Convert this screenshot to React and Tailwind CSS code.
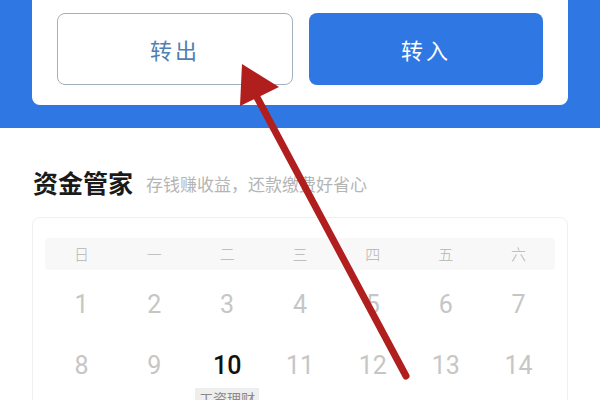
export default function App() {
  const weekdays = ["日", "一", "二", "三", "四", "五", "六"]
  const row1 = [1, 2, 3, 4, 5, 6, 7]
  const row2 = [8, 9, 10, 11, 12, 13, 14]

  return (
    <div
      className="relative w-[600px] h-[400px] overflow-hidden bg-white"
      style={{ fontFamily: '"Noto Sans CJK SC", "Noto Sans", sans-serif' }}
    >
      {/* Blue header band with action card */}
      <div className="bg-[#2f78e4] px-[32px] pb-[23px]">
        <div className="h-[105px] bg-white rounded-b-[8px] px-[25px] pt-[13px] flex gap-[16px]">
          <button className="flex-1 h-[72px] rounded-[8px] border border-[#a3b0bd] text-[#4f7fb3] text-[22px] tracking-[3px]">
            转出
          </button>
          <button className="flex-1 h-[72px] rounded-[8px] bg-[#2f78e4] text-white text-[22px] tracking-[3px]">
            转入
          </button>
        </div>
      </div>

      {/* Section title */}
      <div className="mt-[39px] px-[33px] flex items-center gap-[13px] h-[32px]">
        <span className="text-[25px] font-bold text-[#1a1a1a]">资金管家</span>
        <span className="text-[17px] text-[#b5b5b5] mt-[2px]">存钱赚收益，还款缴费好省心</span>
      </div>

      {/* Calendar card */}
      <div className="mt-[18px] mx-[32px] border border-[#f0f0f0] rounded-[8px] px-[12px] pt-[20px] h-[300px]">
        <div className="h-[32px] bg-[#f8f8f8] rounded-[4px] grid grid-cols-7 items-center">
          {weekdays.map((d) => (
            <div key={d} className="text-center text-[15px] font-light text-[#b5b5b5]">
              {d}
            </div>
          ))}
        </div>
        <div className="mt-[5px] grid grid-cols-7">
          {row1.map((n) => (
            <div key={n} className="h-[61px] pt-[16px] flex flex-col items-center">
              <span className="text-[25px] leading-[28px] text-[#c6c6c6]" style={{ fontFamily: "Roboto, sans-serif" }}>
                {n}
              </span>
            </div>
          ))}
          {row2.map((n) => (
            <div key={n} className="h-[61px] pt-[16px] flex flex-col items-center">
              <span
                className={
                  n === 10
                    ? "text-[25px] leading-[28px] text-[#111] font-medium"
                    : "text-[25px] leading-[28px] text-[#c6c6c6]"
                }
                style={{ fontFamily: "Roboto, sans-serif" }}
              >
                {n}
              </span>
              {n === 10 && (
                <span className="mt-[8px] px-[4px] bg-[#eeeeee] text-[14px] leading-[20px] text-[#8a8a8a] whitespace-nowrap">
                  工资理财
                </span>
              )}
            </div>
          ))}
        </div>
      </div>

      {/* Red annotation arrow */}
      <svg className="absolute left-0 top-0 pointer-events-none" width="600" height="400" viewBox="0 0 600 400">
        <line x1="252" y1="88" x2="406" y2="376" stroke="#b01e1e" strokeWidth="7" strokeLinecap="round" />
        <polygon points="242,64 240,106 279,87" fill="#b01e1e" />
      </svg>
    </div>
  )
}
